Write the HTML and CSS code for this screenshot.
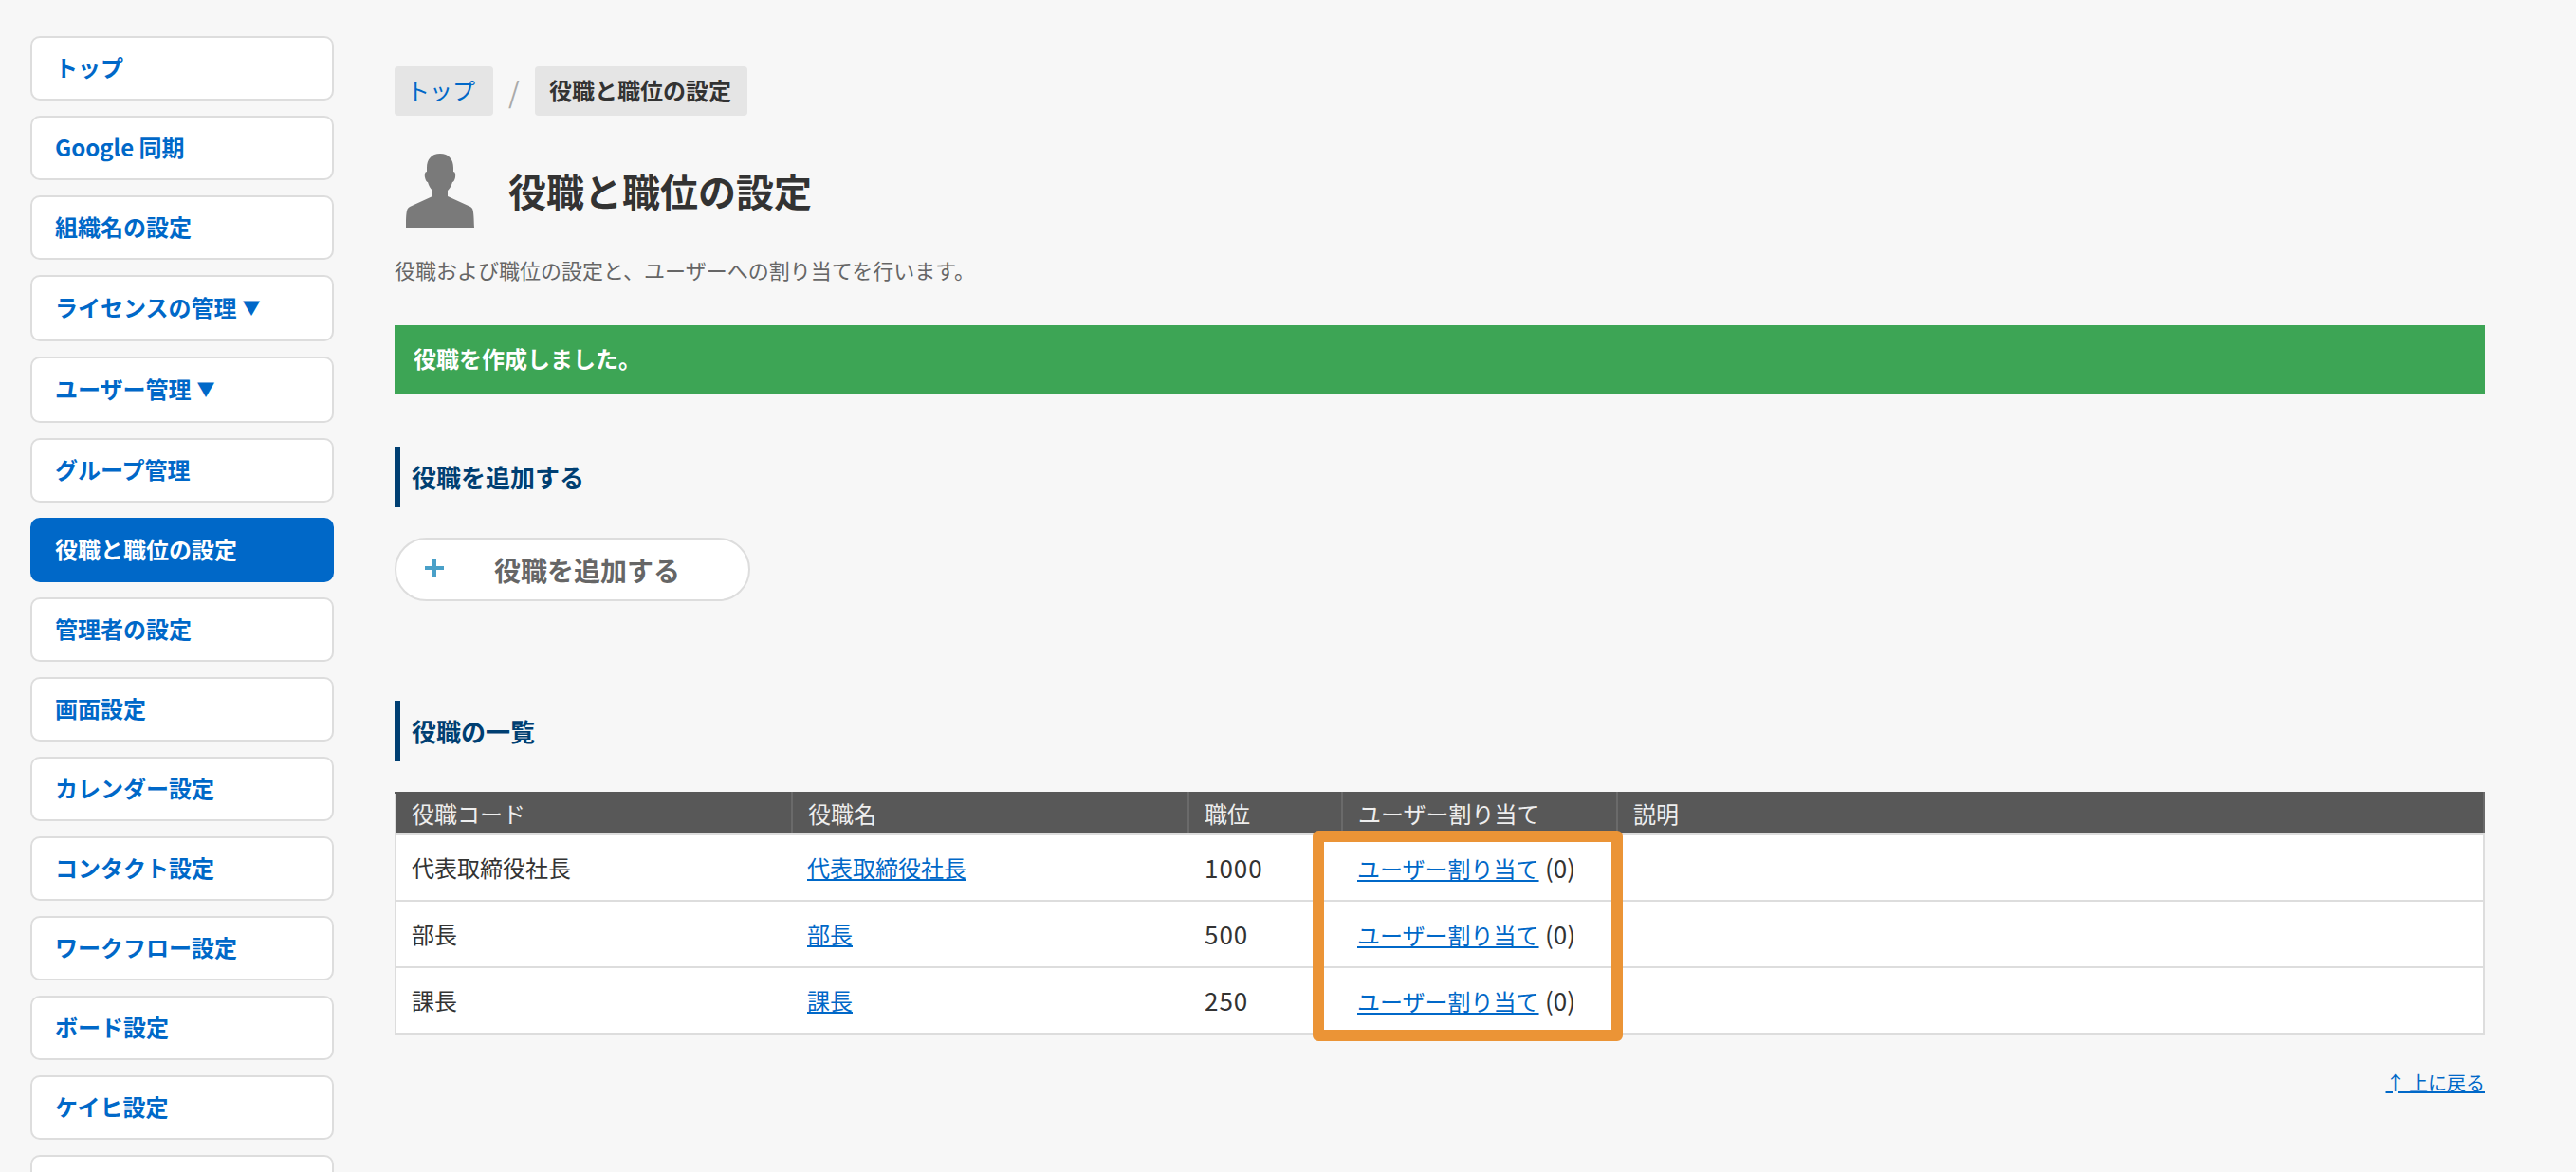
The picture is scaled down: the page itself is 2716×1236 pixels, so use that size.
FILE: index.html
```html
<!DOCTYPE html>
<html lang="ja">
<head>
<meta charset="utf-8">
<title>役職と職位の設定</title>
<link rel="stylesheet" href="styles.css">
</head>
<body>
<div class="page">
  <nav class="sidebar">
    <a class="nav-item" href="#">トップ</a>
    <a class="nav-item" href="#">Google 同期</a>
    <a class="nav-item" href="#">組織名の設定</a>
    <a class="nav-item nav-item-sub" href="#">ライセンスの管理<span class="caret">▼</span></a>
    <a class="nav-item nav-item-sub" href="#">ユーザー管理<span class="caret">▼</span></a>
    <a class="nav-item" href="#">グループ管理</a>
    <a class="nav-item nav-item-active" href="#">役職と職位の設定</a>
    <a class="nav-item" href="#">管理者の設定</a>
    <a class="nav-item" href="#">画面設定</a>
    <a class="nav-item" href="#">カレンダー設定</a>
    <a class="nav-item" href="#">コンタクト設定</a>
    <a class="nav-item" href="#">ワークフロー設定</a>
    <a class="nav-item" href="#">ボード設定</a>
    <a class="nav-item" href="#">ケイヒ設定</a>
    <a class="nav-item" href="#" aria-hidden="true"></a>
  </nav>
  <main class="main">
    <div class="breadcrumb">
      <a class="crumb crumb-link" href="#">トップ</a>
      <span class="crumb-sep">/</span>
      <span class="crumb crumb-current">役職と職位の設定</span>
    </div>
    <div class="title-row">
      <svg class="title-icon" viewBox="0 0 72 78" width="72" height="78" aria-hidden="true">
        <path fill="#7a7a7a" d="M36 0C45 0 50 6 50 15L50 19C52 19 52.5 22 52 25C51.5 28 50 30 49 30C48 34 46 37 44 39L44 45L68 56C71 58 71.5 60 72 78L0 78C0 60 1 58 4 56L28 45L28 39C26 37 24 34 23 30C22 30 20.5 28 20 25C19.5 22 20 19 22 19L22 15C22 6 27 0 36 0Z"/>
      </svg>
      <h1 class="title">役職と職位の設定</h1>
    </div>
    <p class="description">役職および職位の設定と、ユーザーへの割り当てを行います。</p>
    <div class="notice">役職を作成しました。</div>
    <h2 class="section-heading section-first">役職を追加する</h2>
    <a class="add-button" href="#"><span class="add-plus"></span><span>役職を追加する</span></a>
    <h2 class="section-heading section-list">役職の一覧</h2>
    <div class="table-wrap">
      <table class="roles">
        <colgroup>
          <col class="col-code"><col class="col-name"><col class="col-rank"><col class="col-assign"><col class="col-desc">
        </colgroup>
        <thead>
          <tr><th>役職コード</th><th>役職名</th><th>職位</th><th>ユーザー割り当て</th><th>説明</th></tr>
        </thead>
        <tbody>
          <tr><td>代表取締役社長</td><td><a href="#">代表取締役社長</a></td><td class="num">1000</td><td><a href="#">ユーザー割り当て</a> <span class="count">(0)</span></td><td></td></tr>
          <tr><td>部長</td><td><a href="#">部長</a></td><td class="num">500</td><td><a href="#">ユーザー割り当て</a> <span class="count">(0)</span></td><td></td></tr>
          <tr><td>課長</td><td><a href="#">課長</a></td><td class="num">250</td><td><a href="#">ユーザー割り当て</a> <span class="count">(0)</span></td><td></td></tr>
        </tbody>
      </table>
      <div class="highlight"></div>
    </div>
    <p class="back-top"><a href="#">↑ 上に戻る</a></p>
  </main>
</div>
</body>
</html>
```
FILE: styles.css
```css
* { box-sizing: border-box; }
html, body { margin: 0; height: 100%; overflow: hidden; }
body {
  background: #f7f7f7;
  color: #333;
  font-family: "Noto Sans CJK JP", "Noto Sans", sans-serif;
  font-size: 24px;
}
.page { display: flex; height: 100vh; overflow: hidden; }

.sidebar {
  flex: none;
  width: 352px;
  padding: 38px 0 0 32px;
  display: flex;
  flex-direction: column;
  gap: 16px;
}
.nav-item {
  flex: none;
  display: flex;
  align-items: center;
  height: 68px;
  padding: 0 24px 3px;
  background: #fff;
  border: 2px solid #ddd;
  border-radius: 10px;
  color: #0068c8;
  font-size: 24px;
  font-weight: 700;
  text-decoration: none;
}
.nav-item-sub { height: 70px; }
.nav-item-active { background: #0068c8; border-color: #0068c8; color: #fff; }
.caret { margin-left: 6px; font-size: 19px; }

.main { flex: none; width: 2204px; margin-left: 64px; padding-top: 70px; }

.breadcrumb { display: flex; height: 52px; }
.crumb {
  display: flex;
  align-items: center;
  padding: 0 16px 3px;
  background: #e5e5e5;
  border-radius: 4px;
  font-size: 24px;
}
.crumb-link { padding-left: 13px; padding-right: 19px; color: #0068c8; text-decoration: none; }
.crumb-current { padding-left: 15px; padding-right: 17px; color: #333; font-weight: 700; }
.crumb-sep {
  width: 44px;
  display: flex;
  align-items: center;
  justify-content: center;
  color: #aaa;
  font-size: 30px;
}

.title-row { display: flex; align-items: center; margin-top: 40px; padding-left: 12px; height: 78px; }
.title-icon { flex: none; }
.title { margin: 0 0 0 36px; font-size: 40px; font-weight: 700; color: #333; line-height: 78px; }
.description { margin: 28px 0 0; font-size: 22px; line-height: 32px; color: #666; }

.notice {
  margin-top: 43px;
  height: 72px;
  display: flex;
  align-items: center;
  padding: 0 20px 3px;
  background: #3da555;
  color: #fff;
  font-size: 24px;
  font-weight: 700;
}

.section-heading {
  display: flex;
  align-items: center;
  height: 64px;
  margin: 0;
  padding: 0 0 2px 12px;
  border-left: 6px solid #003f72;
  color: #003f72;
  font-size: 26px;
  font-weight: 700;
}
.section-first { margin-top: 56px; }
.section-list { margin-top: 105px; }

.add-button {
  margin-top: 32px;
  width: 375px;
  height: 67px;
  display: flex;
  align-items: center;
  padding-left: 103px;
  position: relative;
  background: #fff;
  border: 2px solid #ddd;
  border-radius: 34px;
  color: #666;
  font-size: 28px;
  font-weight: 700;
  text-decoration: none;
}
.add-plus {
  position: absolute;
  left: 30px;
  top: 20px;
  width: 20px;
  height: 20px;
  background:
    linear-gradient(#4aa0c8, #4aa0c8) center / 20px 4px no-repeat,
    linear-gradient(#4aa0c8, #4aa0c8) center / 4px 20px no-repeat;
}

.table-wrap { position: relative; margin-top: 32px; }
.roles {
  width: 2204px;
  table-layout: fixed;
  border-collapse: collapse;
  font-size: 24px;
}
.col-code, .col-name { width: 418px; }
.col-rank { width: 162px; }
.col-assign { width: 290px; }
.roles th {
  height: 44px;
  padding: 0 17px 2px 16px;
  background: #585858;
  border-top: 2px solid #585858;
  border-right: 2px solid #6a6a6a;
  border-bottom: 2px solid #ddd;
  color: #eee;
  font-weight: 400;
  text-align: left;
}
.roles th:first-child { border-left: 2px solid #ddd; }
.roles td {
  height: 70px;
  padding: 0 17px 2px 16px;
  background: #fff;
  border: 2px solid #ddd;
  border-left: 0;
  border-right: 0;
}
.roles td:first-child { border-left: 2px solid #ddd; }
.roles td:last-child { border-right: 2px solid #ddd; }
.roles a { color: #0068c8; }
.roles .num { font-size: 26px; letter-spacing: 1px; padding-left: 17px; }
.count { margin-left: 1px; font-size: 26px; }
.highlight {
  position: absolute;
  left: 968px;
  top: 41px;
  width: 327px;
  height: 222px;
  border: 12px solid #eb9436;
  border-radius: 6px;
  pointer-events: none;
}

.back-top { margin: 37px 0 0; text-align: right; font-size: 20px; line-height: 28px; }
.back-top a { color: #0068c8; }
```
